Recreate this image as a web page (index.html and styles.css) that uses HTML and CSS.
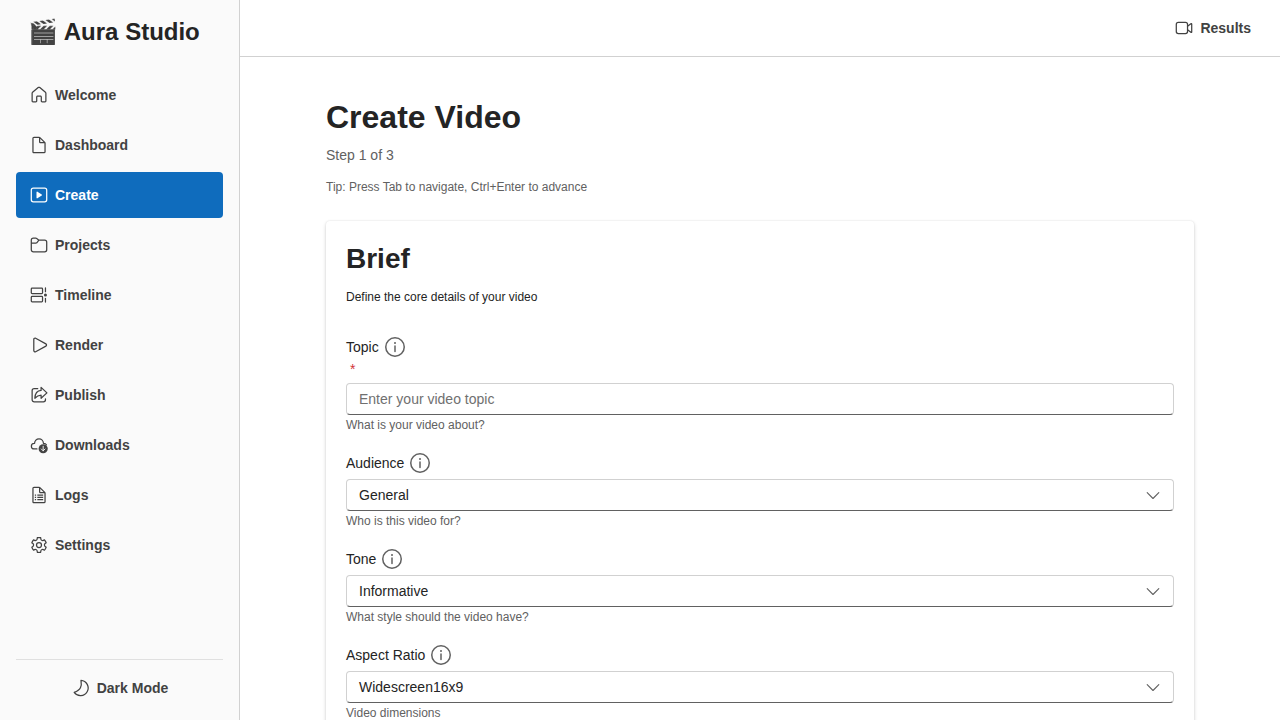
FILE: index.html
```html
<!DOCTYPE html>
<html lang="en">
<head>
<meta charset="utf-8">
<title>Aura Studio</title>
<link rel="stylesheet" href="styles.css">
</head>
<body>
<div class="app">
  <aside class="sidebar">
    <div class="brand">🎬 Aura Studio</div>
    <nav class="nav">
      <a class="nav-item"><svg class="icon solid" viewBox="0 0 24 24"><path d="M10.55 2.53c.84-.7 2.06-.7 2.9 0l6.75 5.7c.5.42.8 1.05.8 1.71v9.31c0 .97-.78 1.75-1.75 1.75h-3.5c-.97 0-1.75-.78-1.75-1.75v-5a.25.25 0 0 0-.25-.25h-3.500a.25.25 0 0 0-.25.25v5c0 .97-.78 1.75-1.750 1.750h-3.500C3.780 21 3 20.220 3 19.250V9.940c0-.66.3-1.290.8-1.720l6.750-5.690Zm1.930 1.150a.75.75 0 0 0-.96 0l-6.750 5.700a.75.75 0 0 0-.27.56v9.310c0 .14.11.25.25.25h3.500c.14 0 .25-.11.25-.25v-5c0-.97.78-1.750 1.750-1.750h3.500c.97 0 1.750.78 1.750 1.750v5c0 .14.11.25.25.25h3.500c.14 0 .25-.11.25-.25V9.940a.75.75 0 0 0-.27-.57l-6.750-5.700Z"/></svg>Welcome</a>
      <a class="nav-item"><svg class="icon solid" viewBox="0 0 24 24"><path d="M18.500 20a.5.5 0 0 1-.5.5H6a.5.5 0 0 1-.5-.5V4c0-.28.22-.5.5-.5h6V8c0 1.100.9 2 2 2h4.500v10Zm-5-15.380 3.880 3.880H14a.5.5 0 0 1-.5-.5V4.620Zm5.910 3.800-5.830-5.830A2 2 0 0 0 12.170 2H6a2 2 0 0 0-2 2v16c0 1.100.9 2 2 2h12a2 2 0 0 0 2-2V9.830a2 2 0 0 0-.59-1.410Z"/></svg>Dashboard</a>
      <a class="nav-item active"><svg class="icon" viewBox="0 0 24 24"><rect x="2.750" y="3.750" width="18.500" height="16.500" rx="2.500"/><path class="fill" d="M9 8.700v6.600c0 .6.6 1 1.100.7l5.200-3.300c.5-.3.5-1 0-1.300L10.100 8c-.5-.3-1.100.1-1.100.7z"/></svg>Create</a>
      <a class="nav-item"><svg class="icon" viewBox="0 0 24 24"><path d="M2.750 6.250A2.500 2.500 0 0 1 5.250 3.750H8.200c.4 0 .8.140 1.100.4l2.600 2.100h6.850a2.500 2.500 0 0 1 2.500 2.500v9a2.500 2.500 0 0 1-2.500 2.500H5.250a2.500 2.500 0 0 1-2.500-2.500zM2.750 9.750H8.200c.4 0 .8-.14 1.100-.4l2.600-3.100"/></svg>Projects</a>
      <a class="nav-item"><svg class="icon" viewBox="0 0 24 24"><rect x="2.750" y="3.750" width="13.500" height="6.500" rx="1"/><rect x="2.750" y="13.750" width="13.500" height="6.500" rx="1"/><path d="M19.750 3.500v4.500M19.750 16v4.500"/><circle class="fill" cx="19.750" cy="12" r="1.800"/></svg>Timeline</a>
      <a class="nav-item"><svg class="icon solid" viewBox="0 0 24 24"><path d="M7.610 4.610a.75.75 0 0 0-1.110.66v13.460c0 .57.6.92 1.100.66l12.300-6.730a.75.75 0 0 0 0-1.320L7.610 4.610ZM5 5.270c0-1.700 1.820-2.790 3.320-1.970l12.300 6.730a2.250 2.250 0 0 1 0 3.950L8.320 20.700A2.250 2.250 0 0 1 5 18.740V5.270Z"/></svg>Render</a>
      <a class="nav-item"><svg class="icon" viewBox="0 0 24 24"><path d="M10.500 4.250H6.250A2.500 2.500 0 0 0 3.750 6.750v11a2.500 2.500 0 0 0 2.500 2.500h11a2.500 2.500 0 0 0 2.500-2.500V16.500M14.500 2.900v3.600c-4.500.3-7.200 3.100-7.500 9.400 2.300-2.500 4.200-3.600 7.500-3.700v3.700l7-6.500z"/></svg>Publish</a>
      <a class="nav-item"><svg class="icon" viewBox="0 0 24 24"><path d="M9.500 16.750H6.300a3.400 3.400 0 0 1-.1-6.800h.5a5.300 5.300 0 0 1 10.600 0h.5a3.600 3.600 0 0 1 3.100 1.700"/><circle class="fill" cx="17" cy="16.500" r="5.500"/><path class="cut" d="M17 13.500v5.500m-2.200-2.200 2.200 2.200 2.200-2.200"/></svg>Downloads</a>
      <a class="nav-item"><svg class="icon solid" viewBox="0 0 24 24"><path d="M18.500 20a.5.5 0 0 1-.5.5H6a.5.5 0 0 1-.5-.5V4c0-.28.22-.5.5-.5h6V8c0 1.100.9 2 2 2h4.500v10Zm-5-15.380 3.880 3.880H14a.5.5 0 0 1-.5-.5V4.620Zm5.910 3.800-5.830-5.830A2 2 0 0 0 12.170 2H6a2 2 0 0 0-2 2v16c0 1.100.9 2 2 2h12a2 2 0 0 0 2-2V9.830a2 2 0 0 0-.59-1.410Z"/><path d="M7 11.250h1.500v1.500H7zM7 14h1.500v1.500H7zM7 16.750h1.500v1.500H7zM10 11.250h7v1.500h-7zM10 14h7v1.500h-7zM10 16.750h7v1.500h-7z"/></svg>Logs</a>
      <a class="nav-item"><svg class="icon solid" viewBox="0 0 24 24"><path d="M12.010 2.250c.74 0 1.470.1 2.180.25.32.07.55.33.59.65l.17 1.530a1.380 1.380 0 0 0 1.920 1.110l1.400-.61c.3-.13.64-.06.85.17a9.800 9.800 0 0 1 2.200 3.790c.1.3 0 .63-.26.82l-1.250.92a1.380 1.380 0 0 0 0 2.220l1.250.92c.26.19.36.52.27.82a9.800 9.800 0 0 1-2.200 3.800.75.75 0 0 1-.85.17l-1.410-.62a1.380 1.380 0 0 0-1.930 1.120l-.17 1.520a.75.75 0 0 1-.58.65 9.520 9.520 0 0 1-4.400 0 .75.75 0 0 1-.57-.65l-.17-1.520a1.380 1.380 0 0 0-1.930-1.110l-1.400.62a.75.75 0 0 1-.86-.18 9.800 9.800 0 0 1-2.200-3.800c-.1-.3 0-.62.27-.81l1.240-.92a1.380 1.380 0 0 0 0-2.220l-1.240-.92a.75.75 0 0 1-.28-.82 9.800 9.800 0 0 1 2.200-3.790c.22-.23.56-.3.86-.17l1.400.62c.4.17.86.15 1.250-.08.38-.22.63-.6.68-1.040l.17-1.530a.75.75 0 0 1 .58-.65c.72-.16 1.450-.24 2.200-.25Zm0 1.500c-.45 0-.9.04-1.350.12l-.11.97a2.890 2.890 0 0 1-4.030 2.330l-.9-.4A8.300 8.300 0 0 0 4.280 9.100l.8.59a2.880 2.880 0 0 1 0 4.640l-.8.59a8.300 8.300 0 0 0 1.350 2.320l.9-.4a2.880 2.880 0 0 1 4.020 2.330l.1.990c.9.15 1.800.15 2.700 0l.1-.99a2.880 2.880 0 0 1 4.020-2.320l.9.4a8.300 8.300 0 0 0 1.350-2.330l-.79-.58a2.880 2.880 0 0 1 0-4.640l.8-.59a8.300 8.300 0 0 0-1.360-2.320l-.9.39a2.880 2.880 0 0 1-4.020-2.320l-.11-.98c-.44-.08-.89-.12-1.330-.12ZM12 8.250a3.750 3.750 0 1 1 0 7.500 3.750 3.750 0 0 1 0-7.500Zm0 1.500a2.250 2.250 0 1 0 0 4.500 2.250 2.250 0 0 0 0-4.500Z"/></svg>Settings</a>
    </nav>
    <div class="sidebar-footer">
      <button class="theme-toggle"><svg class="icon moon" viewBox="0 0 24 24"><path d="M12 2.750a9.250 9.250 0 1 1-8.200 14.600c4.200-1.600 6.400-3.300 7.500-5.600 1.200-2.400 1.400-5 .7-9z"/></svg>Dark Mode</button>
    </div>
  </aside>
  <div class="content">
    <header class="topbar">
      <button class="results"><svg class="icon" viewBox="0 0 24 24"><rect x="2.750" y="5.250" width="13.500" height="13.500" rx="2.500"/><path d="m16.250 10 4-3.200c.4-.3 1-.1 1 .5v9.400c0 .6-.6.8-1 .5l-4-3.200"/></svg>Results</button>
    </header>
    <main class="page">
      <h1 class="page-title">Create Video</h1>
      <p class="step">Step 1 of 3</p>
      <p class="tip">Tip: Press Tab to navigate, Ctrl+Enter to advance</p>
      <section class="card">
        <h2 class="card-title">Brief</h2>
        <p class="card-desc">Define the core details of your video</p>
        <div class="field">
          <div class="label">Topic<svg class="info" viewBox="0 0 24 24"><circle cx="12" cy="12" r="9.250"/><path d="M12 11v5.500"/><circle class="fill" cx="12" cy="8" r="1"/></svg></div>
          <div class="required">*</div>
          <input class="control" type="text" placeholder="Enter your video topic">
          <div class="hint">What is your video about?</div>
        </div>
        <div class="field">
          <div class="label">Audience<svg class="info" viewBox="0 0 24 24"><circle cx="12" cy="12" r="9.250"/><path d="M12 11v5.500"/><circle class="fill" cx="12" cy="8" r="1"/></svg></div>
          <div class="control select">General<svg class="chevron" viewBox="0 0 20 20"><path d="m4.200 7.700 5.800 5.800 5.800-5.800"/></svg></div>
          <div class="hint">Who is this video for?</div>
        </div>
        <div class="field">
          <div class="label">Tone<svg class="info" viewBox="0 0 24 24"><circle cx="12" cy="12" r="9.250"/><path d="M12 11v5.500"/><circle class="fill" cx="12" cy="8" r="1"/></svg></div>
          <div class="control select">Informative<svg class="chevron" viewBox="0 0 20 20"><path d="m4.200 7.700 5.800 5.800 5.800-5.800"/></svg></div>
          <div class="hint">What style should the video have?</div>
        </div>
        <div class="field">
          <div class="label">Aspect Ratio<svg class="info" viewBox="0 0 24 24"><circle cx="12" cy="12" r="9.250"/><path d="M12 11v5.500"/><circle class="fill" cx="12" cy="8" r="1"/></svg></div>
          <div class="control select">Widescreen16x9<svg class="chevron" viewBox="0 0 20 20"><path d="m4.200 7.700 5.800 5.800 5.800-5.800"/></svg></div>
          <div class="hint">Video dimensions</div>
        </div>
      </section>
    </main>
  </div>
</div>
</body>
</html>
```
FILE: styles.css
```css
* { box-sizing: border-box; }
body {
  margin: 0;
  font-family: "Liberation Sans", Arial, sans-serif;
  font-size: 14px;
  line-height: 20px;
  color: #242424;
  background: #fff;
}
h1, h2, p { margin: 0; }
button { font: inherit; border: 0; background: none; padding: 0; }

.app { display: flex; height: 100vh; overflow: hidden; }

.sidebar {
  display: flex;
  flex-direction: column;
  flex: none;
  width: 240px;
  padding: 16px;
  background: #fafafa;
  border-right: 1px solid #d1d1d1;
}
.brand {
  height: 32px;
  margin-bottom: 24px;
  padding-left: 12px;
  font-size: 24px;
  line-height: 32px;
  font-weight: 700;
  white-space: nowrap;
}
.nav { display: flex; flex-direction: column; gap: 4px; }
.nav-item {
  display: flex;
  align-items: center;
  gap: 6px;
  height: 46px;
  padding: 0 13px;
  border-radius: 4px;
  font-weight: 700;
  color: #424242;
}
.nav-item.active { background: #0f6cbd; color: #fff; }

.icon { flex: none; width: 20px; height: 20px; fill: none; stroke: currentColor; stroke-width: 1.5; stroke-linejoin: round; stroke-linecap: round; }
.icon.solid { fill: currentColor; stroke: none; }
.icon .fill { fill: currentColor; stroke: none; }
.icon .cut { stroke: #fafafa; stroke-width: 1.1; }

.sidebar-footer {
  margin-top: auto;
  padding-top: 12px;
  border-top: 1px solid #e0e0e0;
}
.theme-toggle {
  display: flex;
  align-items: center;
  justify-content: center;
  gap: 6px;
  width: 100%;
  height: 32px;
  font-weight: 700;
  color: #424242;
}

.content { flex: 1; display: flex; flex-direction: column; min-width: 0; }
.topbar {
  display: flex;
  flex: none;
  align-items: center;
  justify-content: flex-end;
  height: 57px;
  padding: 0 29px;
  border-bottom: 1px solid #d1d1d1;
}
.results { display: flex; align-items: center; gap: 6px; font-weight: 700; color: #424242; }

.page { flex: 1; min-height: 0; overflow: hidden; padding: 40px 86px 0; }
.page-title { font-size: 32px; line-height: 40px; }
.step { margin-top: 8px; color: #616161; }
.tip { margin-top: 14px; font-size: 12px; line-height: 16px; color: #616161; }
.card {
  margin-top: 26px;
  padding: 20px;
  border-radius: 4px;
  background: #fff;
  box-shadow: 0 0 2px rgba(0, 0, 0, .12), 0 2px 4px rgba(0, 0, 0, .14);
}
.card-title { font-size: 28px; line-height: 36px; }
.card-desc { margin: 12px 0 30px; font-size: 12px; line-height: 16px; }

.field { margin-bottom: 18px; }
.label { display: flex; align-items: center; gap: 4px; height: 24px; }
.info { width: 24px; height: 24px; fill: none; stroke: #616161; stroke-width: 1.5; stroke-linecap: round; }
.info .fill { fill: #616161; stroke: none; }
.required { padding-left: 4px; color: #d13438; }
.control {
  display: flex;
  align-items: center;
  width: 100%;
  height: 32px;
  margin-top: 4px;
  padding: 0 12px;
  border: 1px solid #d1d1d1;
  border-bottom-color: #616161;
  border-radius: 4px;
  background: #fff;
  font: inherit;
  color: #242424;
}
.control::placeholder { color: #707070; opacity: 1; }
.select { justify-content: space-between; padding-right: 10px; }
.chevron { width: 20px; height: 20px; fill: none; stroke: #616161; stroke-width: 1.1; stroke-linecap: round; stroke-linejoin: round; }
.hint { margin-top: 2px; font-size: 12px; line-height: 16px; color: #616161; }
```
